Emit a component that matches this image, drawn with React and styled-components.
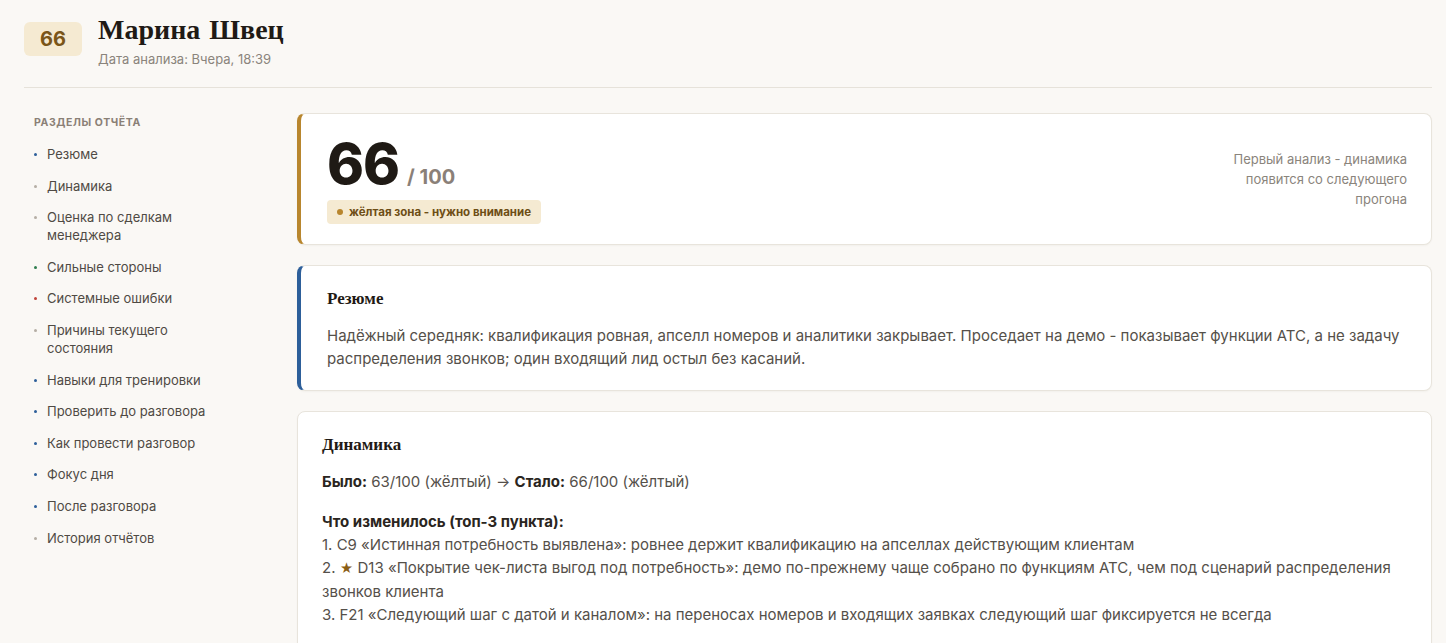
import React from "react";
import styled, { createGlobalStyle } from "styled-components";

const Global = createGlobalStyle`
  html, body { margin: 0; padding: 0; background: #faf8f5; }
  body { font-family: Inter, "Noto Sans", sans-serif; color: #2a2520; }
`;

const Page = styled.div`
  padding: 0 14px 0 24px;
`;

const Header = styled.header`
  display: flex;
  align-items: flex-start;
  gap: 16px;
  padding: 14px 0 20px;
  border-bottom: 1px solid #e6e2da;
`;

const ScoreBadge = styled.div`
  margin-top: 8px;
  width: 58px;
  height: 34px;
  border-radius: 6px;
  background: #f5ead2;
  color: #7a5518;
  font-weight: 700;
  font-size: 20px;
  display: flex;
  align-items: center;
  justify-content: center;
`;

const HeadText = styled.div`
  display: flex;
  flex-direction: column;
`;

const Name = styled.h1`
  margin: 0;
  font-family: "Liberation Serif", serif;
  font-weight: 700;
  font-size: 28px;
  line-height: 32px;
  color: #1f1a15;
  word-spacing: 2px;
`;

const DateLine = styled.div`
  margin-top: 5px;
  font-size: 13px;
  color: #8a847c;
`;

const Layout = styled.div`
  display: grid;
  grid-template-columns: 250px 1fr;
  gap: 23px;
  padding-top: 25px;
`;

const Sidebar = styled.nav`
  padding: 0 60px 0 10px;
`;

const SideLabel = styled.div`
  font-size: 10.5px;
  font-weight: 700;
  letter-spacing: 0.6px;
  color: #8a8076;
  text-transform: uppercase;
  margin-top: 3px;
  margin-bottom: 16px;
`;

const SideList = styled.ul`
  list-style: none;
  margin: 0;
  padding: 0;
  display: flex;
  flex-direction: column;
  gap: 13.6px;
`;

const SideItem = styled.li`
  position: relative;
  padding-left: 13px;
  font-size: 13px;
  line-height: 18px;
  color: #4f4a44;
  &::before {
    content: "";
    position: absolute;
    left: 0;
    top: 8px;
    width: 3px;
    height: 3px;
    border-radius: 50%;
    background: ${(p) => p.$dot};
  }
`;

const Main = styled.main`
  display: flex;
  flex-direction: column;
  gap: 20px;
`;

const Card = styled.section`
  background: #fff;
  border: 1px solid #e8e4dc;
  border-left: ${(p) => (p.$accent ? `4px solid ${p.$accent}` : "1px solid #e8e4dc")};
  border-radius: 8px;
  padding: ${(p) => p.$pad || "24px"};
  box-shadow: 0 1px 2px rgba(60, 40, 10, 0.04);
`;

const ScoreCard = styled(Card)`
  display: flex;
  justify-content: space-between;
  align-items: center;
  padding: 20px 24px 20px 26px;
`;

const ScoreLeft = styled.div`
  display: flex;
  flex-direction: column;
  align-items: flex-start;
`;

const ScoreRow = styled.div`
  display: flex;
  align-items: baseline;
  gap: 8px;
`;

const BigScore = styled.div`
  font-size: 56px;
  font-weight: 800;
  line-height: 60px;
  color: #1f1a15;
  letter-spacing: -1px;
`;

const OutOf = styled.div`
  font-size: 20px;
  font-weight: 700;
  color: #8a8078;
`;

const Pill = styled.div`
  margin-top: 6px;
  display: flex;
  align-items: center;
  gap: 6px;
  padding: 0 10px;
  height: 24px;
  border-radius: 4px;
  background: #f5ead2;
  color: #6e4e16;
  font-size: 11.5px;
  font-weight: 700;
  &::before {
    content: "";
    width: 6px;
    height: 6px;
    border-radius: 50%;
    background: #b8862e;
  }
`;

const SideNote = styled.div`
  text-align: right;
  font-size: 13px;
  line-height: 20px;
  color: #8a847c;
  width: 190px;
`;

const CardTitle = styled.h2`
  margin: 0 0 14px;
  font-family: "Liberation Serif", serif;
  font-weight: 700;
  font-size: 17px;
  line-height: 22px;
  color: #1f1a15;
`;

const Body = styled.p`
  margin: 0;
  font-size: 15px;
  line-height: 23px;
  color: #55504a;
`;

const Strong = styled.b`
  font-weight: 700;
  color: #2a2520;
`;

const Block = styled.div`
  margin-top: ${(p) => p.$mt || 0}px;
`;

const Star = styled.span`
  color: #8a5e14;
  font-size: 13px;
`;

const items = [
  ["Резюме", "#2d5f9a"],
  ["Динамика", "#b5aea5"],
  ["Оценка по сделкам менеджера", "#b5aea5"],
  ["Сильные стороны", "#2e7d4f"],
  ["Системные ошибки", "#c0443a"],
  ["Причины текущего состояния", "#b5aea5"],
  ["Навыки для тренировки", "#2d5f9a"],
  ["Проверить до разговора", "#2d5f9a"],
  ["Как провести разговор", "#2d5f9a"],
  ["Фокус дня", "#2d5f9a"],
  ["После разговора", "#2d5f9a"],
  ["История отчётов", "#b5aea5"],
];

export default function App() {
  return (
    <Page>
      <Global />
      <Header>
        <ScoreBadge>66</ScoreBadge>
        <HeadText>
          <Name>Марина Швец</Name>
          <DateLine>Дата анализа: Вчера, 18:39</DateLine>
        </HeadText>
      </Header>
      <Layout>
        <Sidebar>
          <SideLabel>Разделы отчёта</SideLabel>
          <SideList>
            {items.map(([t, c]) => (
              <SideItem key={t} $dot={c}>
                {t}
              </SideItem>
            ))}
          </SideList>
        </Sidebar>
        <Main>
          <ScoreCard $accent="#b8862e">
            <ScoreLeft>
              <ScoreRow>
                <BigScore>66</BigScore>
                <OutOf>/ 100</OutOf>
              </ScoreRow>
              <Pill>жёлтая зона - нужно внимание</Pill>
            </ScoreLeft>
            <SideNote>
              Первый анализ - динамика появится со следующего прогона
            </SideNote>
          </ScoreCard>
          <Card $accent="#2d5f9a" $pad="22px 24px 20px 26px">
            <CardTitle>Резюме</CardTitle>
            <Body>
              Надёжный середняк: квалификация ровная, апселл номеров и аналитики
              закрывает. Проседает на демо - показывает функции АТС, а не задачу
              распределения звонков; один входящий лид остыл без касаний.
            </Body>
          </Card>
          <Card $pad="22px 24px 24px 24px">
            <CardTitle>Динамика</CardTitle>
            <Body>
              <Strong>Было:</Strong> 63/100 (жёлтый) → <Strong>Стало:</Strong>{" "}
              66/100 (жёлтый)
            </Body>
            <Block $mt={17}>
              <Body>
                <Strong>Что изменилось (топ-3 пункта):</Strong>
              </Body>
              <Body>
                1. C9 «Истинная потребность выявлена»: ровнее держит квалификацию
                на апселлах действующим клиентам
              </Body>
              <Body>
                2. <Star>★</Star> D13 «Покрытие чек-листа выгод под потребность»:
                демо по-прежнему чаще собрано по функциям АТС, чем под сценарий
                распределения звонков клиента
              </Body>
              <Body>
                3. F21 «Следующий шаг с датой и каналом»: на переносах номеров и
                входящих заявках следующий шаг фиксируется не всегда
              </Body>
            </Block>
          </Card>
        </Main>
      </Layout>
    </Page>
  );
}
